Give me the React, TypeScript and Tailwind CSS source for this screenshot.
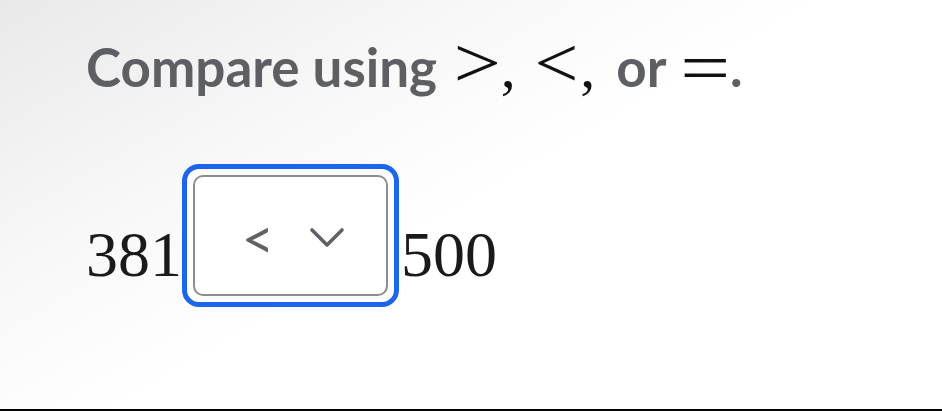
import React from "react";

const mathFont = { fontFamily: '"Liberation Serif", "DejaVu Serif", serif' };

export default function App() {
  return (
    <div className="h-[411px] w-full overflow-hidden border-b-2 border-black bg-[linear-gradient(150deg,#e9e9e9_0%,#f8f8f8_30%,#ffffff_50%)]">
      <div className="pl-[86px] pt-[27px]">
        <h1 className="flex h-[53px] items-baseline text-[53px] font-bold leading-none text-[#5d5f63] [font-family:Lato,'Noto_Sans',sans-serif]">
          <span>Compare using</span>
          <span className="ml-[20px] inline-block scale-x-[1.17] text-[72px] font-normal text-[#111]" style={mathFont}>&gt;</span>
          <span className="ml-[3px] text-[60px] font-normal text-[#111]" style={mathFont}>,</span>
          <span className="ml-[20px] inline-block scale-x-[1.08] text-[72px] font-normal text-[#111]" style={mathFont}>&lt;</span>
          <span className="ml-[4px] text-[60px] font-normal text-[#111]" style={mathFont}>,</span>
          <span className="ml-[21px]">or</span>
          <span className="ml-[19px] inline-block translate-y-[5px] scale-x-[1.23] text-[72px] font-normal text-[#111]" style={mathFont}>=</span>
          <span className="ml-[4px]">.</span>
        </h1>

        <div className="mt-[84px] flex items-center text-[#1a1a1a]" style={mathFont}>
          <span className="mt-[38px] text-[64px] leading-none">381</span>
          <div className="rounded-[17px] border-[5px] border-[#1b66ec] bg-white p-[6px]">
            <div className="flex h-[121px] w-[195px] items-center justify-center gap-[35px] rounded-[10px] border-2 border-[#8d8d8d] bg-white pl-[6px] pt-[4px]">
              <span className="text-[56px] leading-none text-[#5f6166] [font-family:Lato,sans-serif]">&lt;</span>
              <svg width="36" height="22" viewBox="0 0 36 22" fill="none">
                <polyline
                  points="3,3 18,18 33,3"
                  stroke="#5f6166"
                  strokeWidth="3.6"
                  strokeLinecap="round"
                  strokeLinejoin="round"
                />
              </svg>
            </div>
          </div>
          <span className="ml-[2px] mt-[38px] text-[64px] leading-none">500</span>
        </div>
      </div>
    </div>
  );
}
